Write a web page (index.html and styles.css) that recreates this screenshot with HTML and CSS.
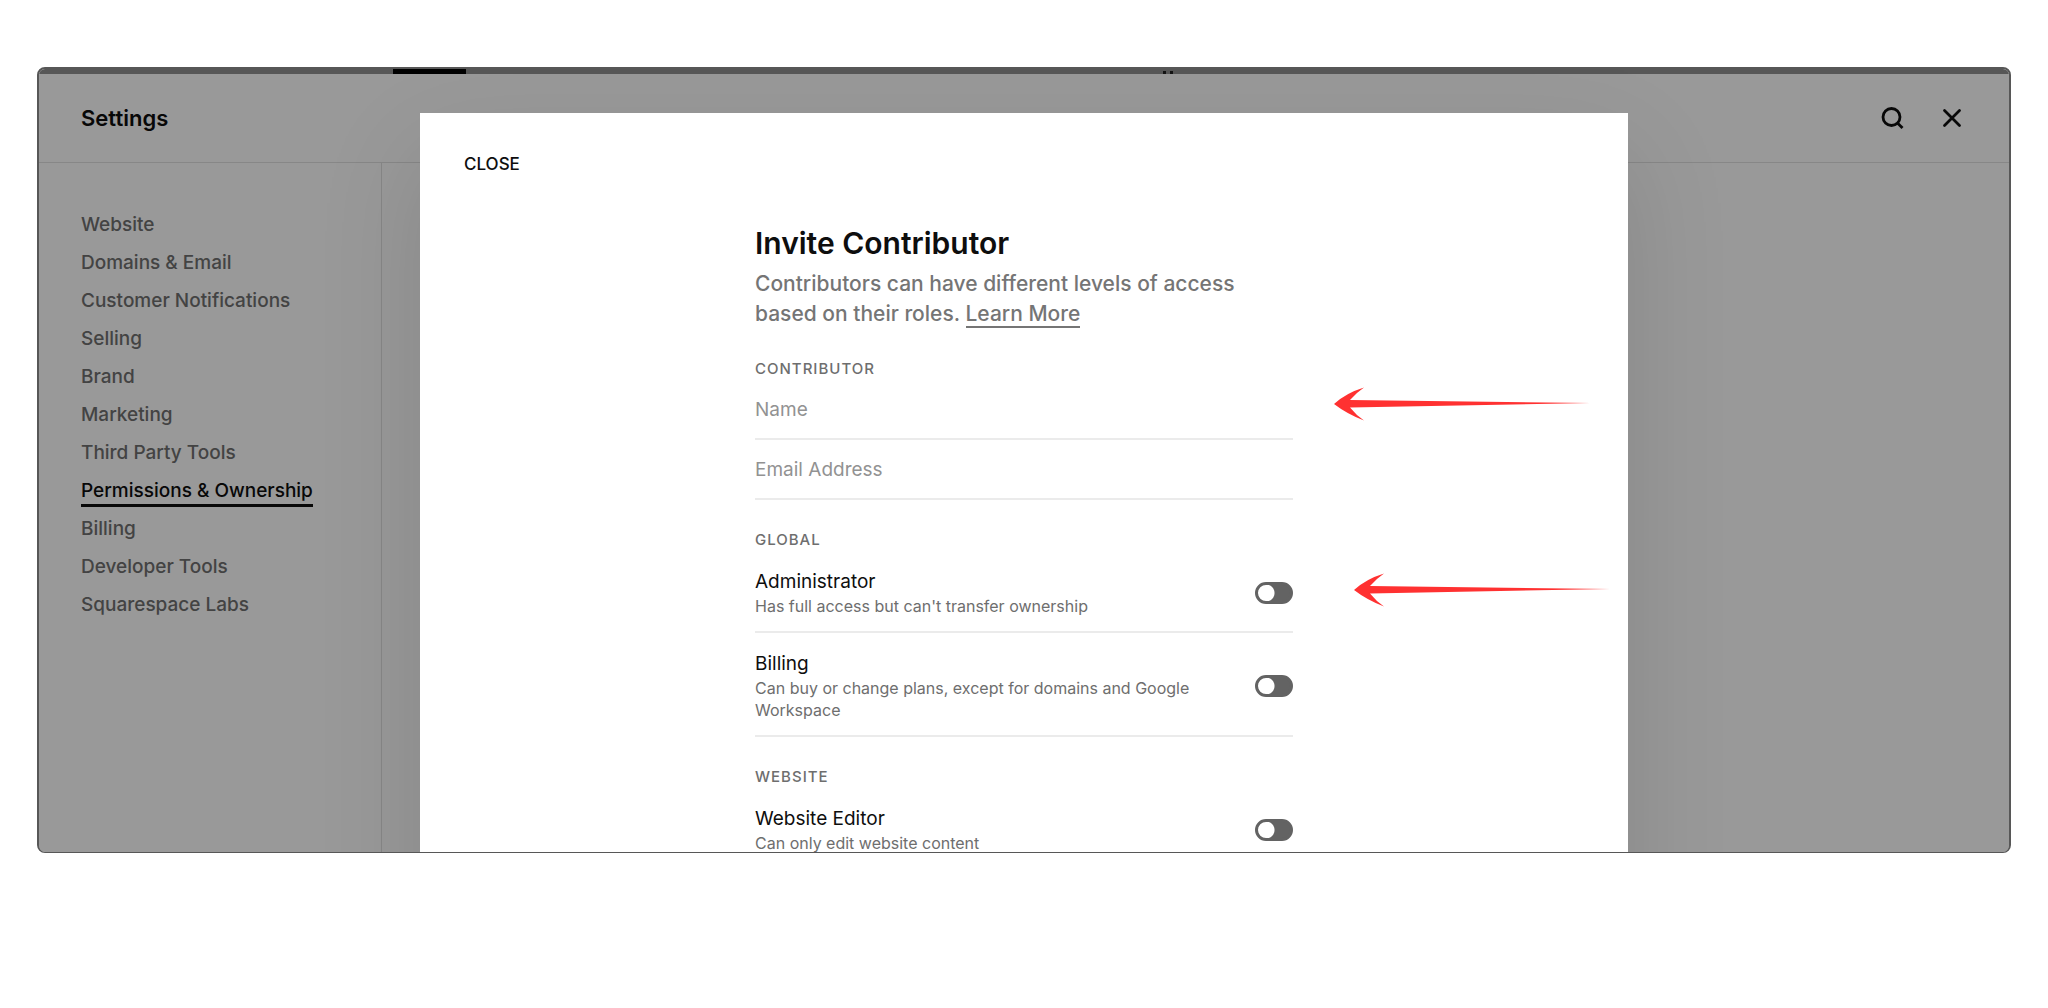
FILE: index.html
```html
<!DOCTYPE html>
<html lang="en">
<head>
  <meta charset="UTF-8">
  <meta name="viewport" content="width=device-width, initial-scale=1">
  <title>Settings - Permissions &amp; Ownership</title>
  <link rel="stylesheet" href="styles.css">
</head>
<body>
  <div class="window">
    <div class="top-strip">
      <span class="strip-tab"></span>
      <span class="strip-dots"><i></i><i></i></span>
    </div>

    <header class="settings-header">
      <h1>Settings</h1>
      <div class="header-actions">
        <button class="icon-button" type="button" aria-label="Search">
          <svg width="24" height="24" viewBox="0 0 24 24" fill="none" stroke="currentColor" stroke-width="2.8">
            <circle cx="11.5" cy="11" r="8.5"/>
            <path d="M17.200 16.700L22.500 22"/>
          </svg>
        </button>
        <button class="icon-button" type="button" aria-label="Close settings">
          <svg width="24" height="24" viewBox="0 0 24 24" fill="none" stroke="currentColor" stroke-width="2.8" stroke-linecap="round">
            <path d="M4.5 4.5L19.5 19.5M19.5 4.5L4.5 19.5"/>
          </svg>
        </button>
      </div>
    </header>

    <div class="settings-body">
      <nav class="sidebar">
        <a href="#">Website</a>
        <a href="#">Domains &amp; Email</a>
        <a href="#">Customer Notifications</a>
        <a href="#">Selling</a>
        <a href="#">Brand</a>
        <a href="#">Marketing</a>
        <a href="#">Third Party Tools</a>
        <a href="#" class="active">Permissions &amp; Ownership</a>
        <a href="#">Billing</a>
        <a href="#">Developer Tools</a>
        <a href="#">Squarespace Labs</a>
      </nav>
    </div>

    <!-- Invite dialog -->
    <div class="overlay">
      <div class="modal" role="dialog" aria-labelledby="inviteTitle">
        <button class="close-button" type="button">CLOSE</button>

        <form class="invite-form">
          <h2 id="inviteTitle">Invite Contributor</h2>
          <p class="intro">Contributors can have different levels of access based on their roles. <a href="#">Learn More</a></p>

          <section>
            <h3>CONTRIBUTOR</h3>
            <div class="field">
              <input type="text" id="name" placeholder="Name" aria-label="Name">
              <svg class="arrow arrow-name" width="256" height="34" viewBox="0 0 256 34" aria-hidden="true">
                <path d="M0 17Q12 6 30 .5Q22 6 16 13L256 16L16 20.500Q22 28 30 33.500Q13 27 0 17Z"/>
              </svg>
            </div>
            <div class="field">
              <input type="email" id="email" placeholder="Email Address" aria-label="Email Address">
            </div>
          </section>

          <section>
            <h3>GLOBAL</h3>
            <div class="role">
              <label for="administrator">
                <span class="role-name">Administrator</span>
                <span class="role-info">Has full access but can't transfer ownership</span>
              </label>
              <input type="checkbox" class="toggle" id="administrator">
              <svg class="arrow arrow-admin" width="256" height="34" viewBox="0 0 256 34" aria-hidden="true">
                <path d="M0 17Q12 6 30 .5Q22 6 16 13L256 16L16 20.500Q22 28 30 33.500Q13 27 0 17Z"/>
              </svg>
            </div>
            <div class="role">
              <label for="billing">
                <span class="role-name">Billing</span>
                <span class="role-info">Can buy or change plans, except for domains and Google Workspace</span>
              </label>
              <input type="checkbox" class="toggle" id="billing">
            </div>
          </section>

          <section>
            <h3>WEBSITE</h3>
            <div class="role">
              <label for="websiteEditor">
                <span class="role-name">Website Editor</span>
                <span class="role-info">Can only edit website content</span>
              </label>
              <input type="checkbox" class="toggle" id="websiteEditor">
            </div>
          </section>
        </form>
      </div>
    </div>
  </div>
</body>
</html>
```
FILE: styles.css
```css
* {
  box-sizing: border-box;
}
body {
  margin: 0;
  background: #fff;
  color: #0e0e0e;
  font-family: Inter, "Liberation Sans", sans-serif;
}
h1, h2, h3, p {
  margin: 0;
}
button {
  padding: 0;
  border: none;
  background: none;
  color: inherit;
  font-family: inherit;
  cursor: pointer;
}
/* Window */
.window {
  position: relative;
  display: flex;
  flex-direction: column;
  height: 78vh;
  margin: 67px 37px 0;
  overflow: hidden;
  border: 2px solid #575757;
  border-bottom-width: 1px;
  border-radius: 8px;
}
.top-strip {
  display: flex;
  align-items: flex-end;
  height: 5px;
  background: #919191;
}
.strip-tab {
  width: 73px;
  height: 5px;
  margin-left: 354px;
  background: #000;
}
.strip-dots {
  display: flex;
  gap: 4px;
  margin-left: 697px;
}
.strip-dots i {
  width: 3px;
  height: 3px;
  background: #222;
}
/* Header */
.settings-header {
  display: flex;
  align-items: center;
  justify-content: space-between;
  height: 89px;
  padding: 0 45px 0 42px;
  border-bottom: 1px solid #e2e2e2;
}
.settings-header h1 {
  font-size: 22px;
  font-weight: 600;
}
.header-actions {
  display: flex;
  gap: 36px;
}
.icon-button {
  display: flex;
}
/* Sidebar */
.settings-body {
  display: flex;
  flex: 1;
}
.sidebar {
  display: flex;
  flex-direction: column;
  align-items: flex-start;
  gap: 12px;
  width: 343px;
  padding: 49px 42px;
  border-right: 1px solid #e2e2e2;
}
.sidebar a {
  color: #707070;
  font-size: 19px;
  font-weight: 500;
  line-height: 26px;
  text-decoration: none;
  white-space: nowrap;
}
.sidebar .active {
  color: #0e0e0e;
  box-shadow: 0 3px #0e0e0e;
}
/* Modal */
.overlay {
  position: absolute;
  inset: 0;
  display: flex;
  align-items: flex-start;
  justify-content: center;
  padding: 44px 24px 0;
  background: rgba(0, 0, 0, 0.4);
}
.modal {
  width: 100%;
  max-width: 1208px;
  padding: 39px 44px 240px;
  background: #fff;
  box-shadow: 0 40px 100px rgba(0, 0, 0, 0.12);
}
.close-button {
  display: block;
  font-size: 17px;
  font-weight: 500;
  line-height: 24px;
}
.invite-form {
  max-width: 538px;
  margin: 48px auto 0;
}
.invite-form h2 {
  font-size: 30px;
  font-weight: 600;
  line-height: 38px;
}
.intro {
  margin-top: 7px;
  color: #757575;
  font-size: 21px;
  font-weight: 500;
  line-height: 30px;
}
.intro a {
  color: inherit;
  text-decoration: none;
  border-bottom: 2px solid #757575;
}
.invite-form section {
  margin-top: 30px;
}
.invite-form h3 {
  margin-bottom: 1px;
  color: #6e6e6e;
  font-size: 15px;
  font-weight: 500;
  letter-spacing: 1px;
  line-height: 20px;
}
.field {
  position: relative;
  border-bottom: 2px solid #ebebeb;
}
.field input {
  display: block;
  width: 100%;
  height: 58px;
  padding: 0;
  border: none;
  outline: none;
  background: none;
  color: #0e0e0e;
  font-family: inherit;
  font-size: 19px;
}
.field input::placeholder {
  color: #929292;
}
/* Roles */
.role {
  position: relative;
  display: flex;
  align-items: center;
  justify-content: space-between;
  gap: 60px;
  padding: 17px 0 14px;
  border-bottom: 2px solid #ebebeb;
}
.role-name,
.role-info {
  display: block;
}
.role-name {
  font-size: 19px;
  line-height: 27px;
}
.role-info {
  color: #6e6e6e;
  font-size: 16px;
  line-height: 22px;
}
.toggle {
  flex: none;
  appearance: none;
  width: 38px;
  height: 22px;
  margin: 0;
  border: 3px solid #636363;
  border-radius: 11px;
  background: radial-gradient(circle at 8px 8px, #fff 8px, #636363 9px);
  cursor: pointer;
}
/* Red pointers */
.arrow {
  position: absolute;
  fill: #ff3131;
}
.arrow-name {
  top: 7px;
  left: calc(100% + 41px);
}
.arrow-admin {
  top: 22px;
  left: calc(100% + 61px);
}
```
